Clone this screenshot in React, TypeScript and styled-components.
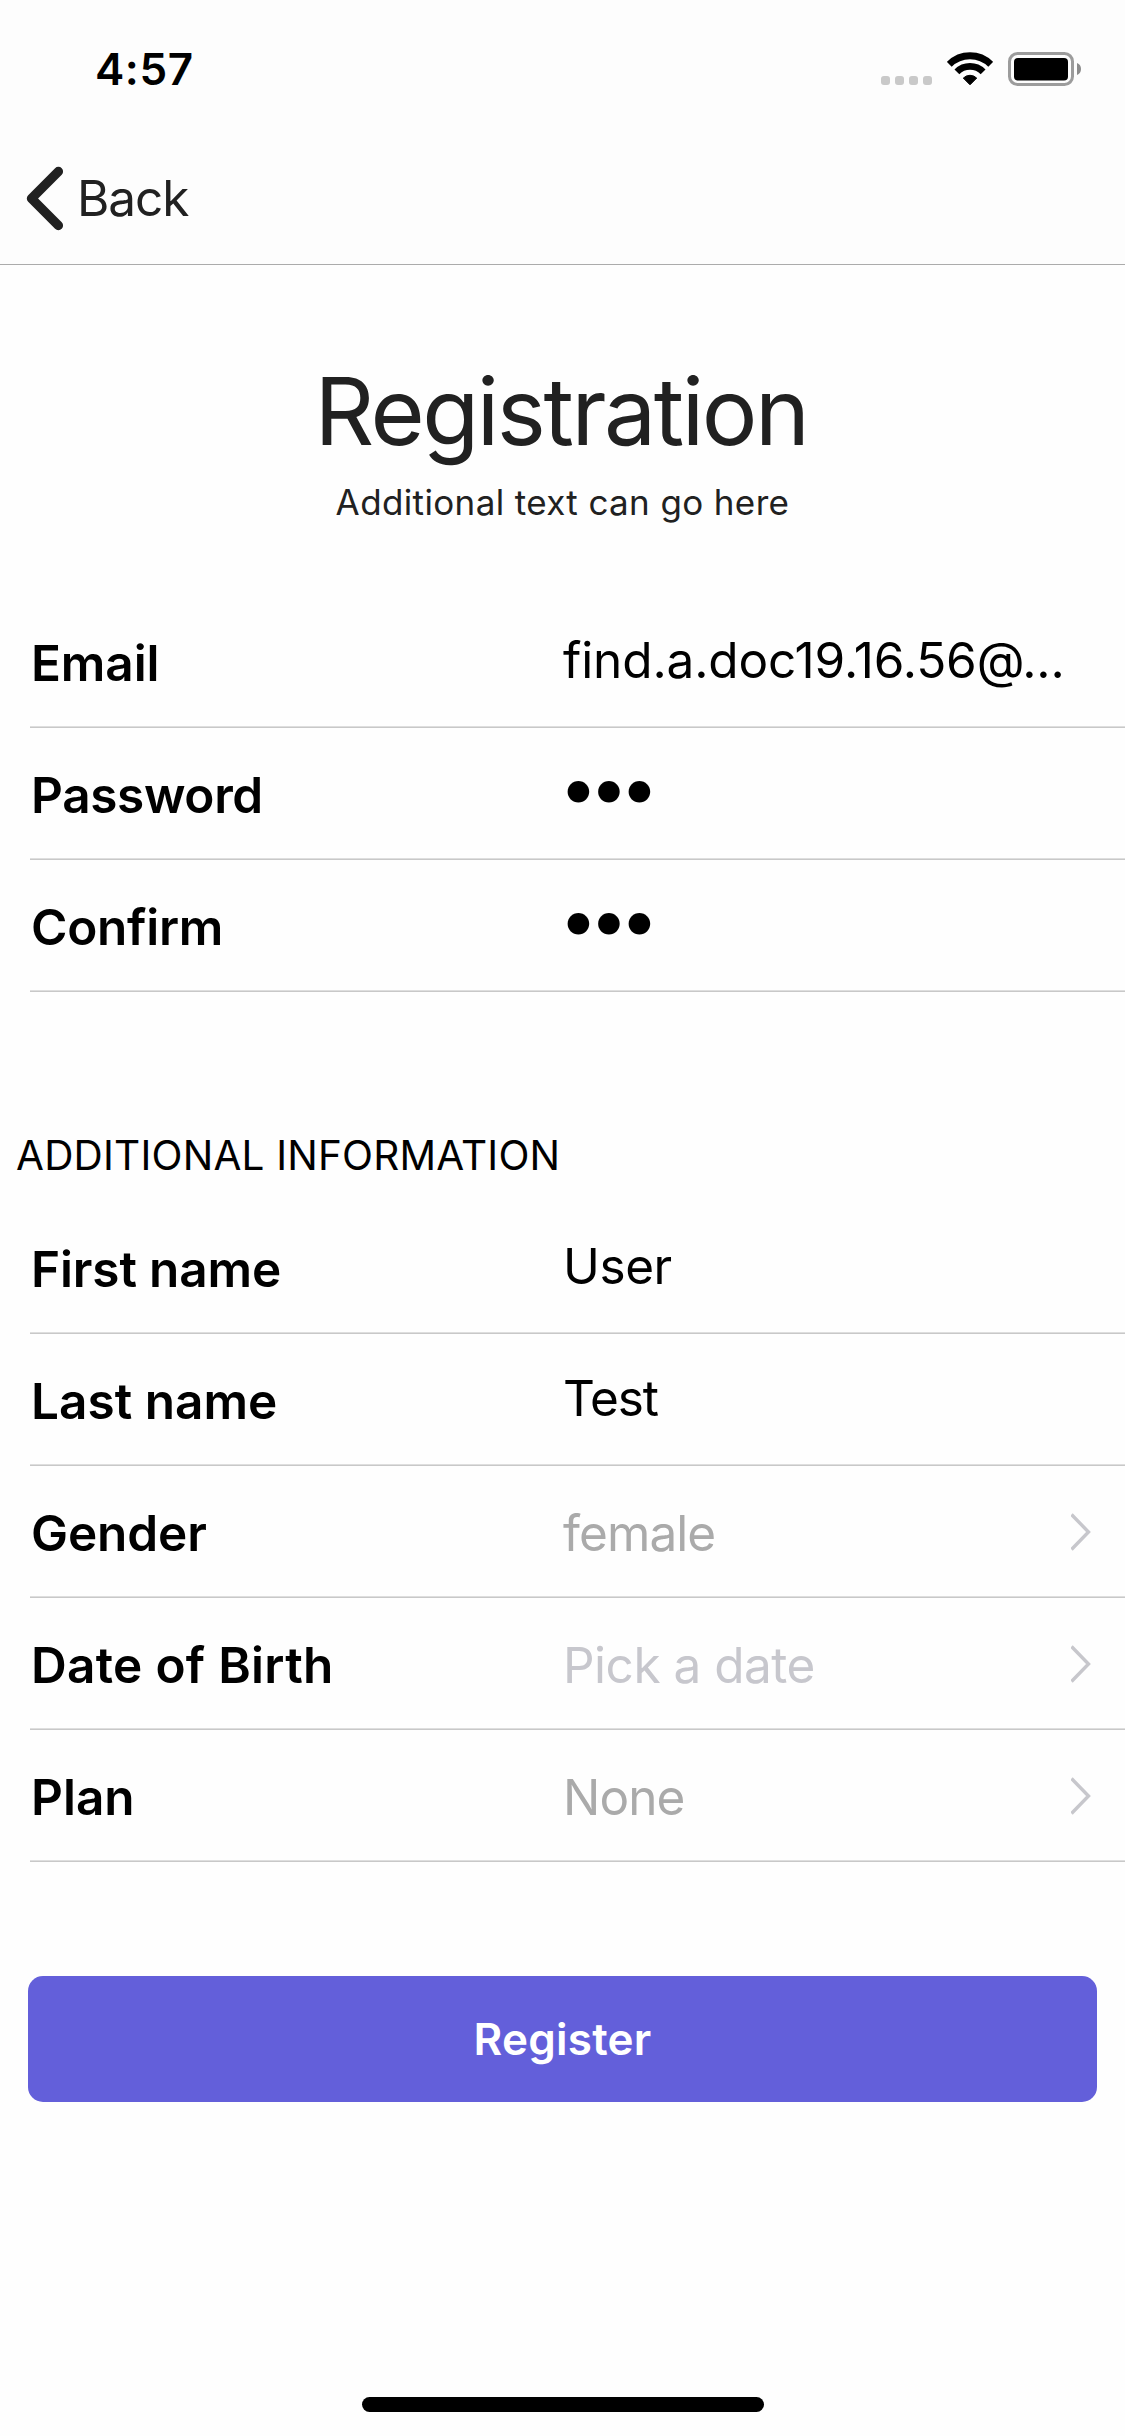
import React from "react";
import styled, { createGlobalStyle } from "styled-components";

const GlobalStyle = createGlobalStyle`
  * { box-sizing: border-box; }
  body {
    margin: 0;
    background: #fefefe;
    font-family: Inter, "Liberation Sans", sans-serif;
    color: #000;
  }
`;

const Screen = styled.div`
  display: flex;
  flex-direction: column;
  width: 1125px;
  height: 2436px;
  overflow: hidden;
`;

const Header = styled.header`
  height: 265px;
  background: #fdfdfd;
  border-bottom: 1px solid #ababab;
`;

const StatusBar = styled.div`
  display: flex;
  justify-content: space-between;
  align-items: flex-start;
  height: 132px;
  padding: 44px 44px 0 95px;
`;

const Time = styled.span`
  font-size: 44px;
  line-height: 50px;
  font-weight: 600;
  letter-spacing: 0.56px;
`;

const Indicators = styled.div`
  display: flex;
  align-items: flex-start;
  gap: 15px;
  padding-top: 8px;
`;

const SignalDots = styled.div`
  display: flex;
  gap: 5px;
  padding-top: 24px;
`;

const SignalDot = styled.span`
  width: 9px;
  height: 9px;
  border-radius: 3px;
  background: #c9c9c9;
`;

const Icon = styled.svg`
  display: block;
  flex: none;
`;

const NavBar = styled.nav`
  display: flex;
  align-items: center;
  height: 132px;
  padding-left: 24px;
`;

const BackButton = styled.button`
  display: flex;
  align-items: center;
  gap: 11px;
  padding: 0;
  border: 0;
  background: none;
  color: #212121;
  font: 400 49.5px/60px Inter, "Liberation Sans", sans-serif;
  letter-spacing: -1.1px;
`;

const Content = styled.main`
  flex: 1;
  display: flex;
  flex-direction: column;
`;

const Heading = styled.div`
  padding-top: 90px;
  text-align: center;
  color: #212121;
`;

const Title = styled.h1`
  margin: 0;
  padding-right: 3px;
  font-size: 93px;
  line-height: 112px;
  font-weight: 400;
  letter-spacing: -2.47px;
`;

const Subtitle = styled.p`
  margin: 13px 0 0;
  font-size: 35px;
  line-height: 44px;
  letter-spacing: 0.37px;
`;

const FieldList = styled.div<{ $top: number }>`
  margin: ${(p) => p.$top}px 0 0 30px;
`;

const SectionTitle = styled.h2`
  margin: 139px 0 0 16px;
  font-size: 40.5px;
  line-height: 50px;
  font-weight: 400;
  letter-spacing: 0.2px;
`;

const Row = styled.div`
  display: grid;
  grid-template-columns: 533px 1fr auto;
  align-items: center;
  height: 132px;
  padding-right: 34px;
  border-bottom: 1px solid #c8c8c8;
  box-shadow: inset 0 -1px 0 #dedede;
`;

const Label = styled.label<{ $spacing: number }>`
  padding: 3px 0 0 1px;
  font-size: 49.5px;
  line-height: 60px;
  font-weight: 600;
  letter-spacing: ${(p) => p.$spacing}px;
`;

type Tone = "entered" | "chosen" | "placeholder";

const toneColor: Record<Tone, string> = {
  entered: "#000",
  chosen: "#aaaaaa",
  placeholder: "#c7c7cd",
};

const Value = styled.span<{ $tone: Tone; $spacing: number }>`
  padding-top: ${(p) => (p.$tone === "entered" ? 0 : 3)}px;
  padding-bottom: ${(p) => (p.$tone === "entered" ? 3 : 0)}px;
  font-size: 49.5px;
  line-height: 60px;
  white-space: nowrap;
  color: ${(p) => toneColor[p.$tone]};
  letter-spacing: ${(p) => p.$spacing}px;
`;

const Secret = styled.span`
  padding-bottom: 13px;
  margin-left: -4px;
  font-size: 69px;
  line-height: 84px;
  letter-spacing: -8.3px;
`;

const ChevronBox = styled.span`
  padding-top: 1px;
`;

const RegisterButton = styled.button`
  display: flex;
  align-items: center;
  justify-content: center;
  flex: none;
  height: 126px;
  margin: 114px 28px 0;
  padding: 0;
  border: 0;
  border-radius: 15px;
  background: #635fda;
  color: #fff;
  font: 600 44px/54px Inter, "Liberation Sans", sans-serif;
  letter-spacing: 0.25px;
`;

const HomeIndicator = styled.div`
  width: 402px;
  height: 15px;
  margin: 0 auto 24px;
  border-radius: 8px;
  background: #000;
`;

function WifiIcon() {
  return (
    <Icon width="46" height="34" viewBox="0 0 46 34" fill="none" stroke="#000" strokeWidth="6.8">
      <path d="M2.3 12.3A29.3 29.3 0 0 1 43.7 12.3" />
      <path d="M9.9 19.9A18.5 18.5 0 0 1 36.1 19.9" />
      <path d="M16.3 26.1A9.4 9.4 0 0 1 29.7 26.1L23 32.8Z" fill="#000" stroke="#000" strokeWidth="1" strokeLinejoin="round" />
    </Icon>
  );
}

function BatteryIcon() {
  return (
    <Icon width="73" height="34" viewBox="0 0 73 34">
      <rect x="1.5" y="1.5" width="63" height="31" rx="8" fill="none" stroke="#9c9c9c" strokeWidth="3" />
      <rect x="6" y="6" width="54" height="22.5" rx="4" fill="#000" />
      <path d="M69 11C71.6 12 73 14.2 73 17C73 19.8 71.6 22 69 23Z" fill="#8c8c8c" />
    </Icon>
  );
}

function BackIcon() {
  return (
    <Icon width="42" height="66" viewBox="0 0 42 66" fill="none">
      <path d="M34.4 6.5L7.5 33.5L34.4 60.5" stroke="#212121" strokeWidth="9.4" strokeLinecap="round" strokeLinejoin="round" />
    </Icon>
  );
}

function DisclosureIcon() {
  return (
    <Icon width="20" height="38" viewBox="0 0 20 38" fill="none">
      <path d="M0.5 1.5L17.5 19L0.5 36.5" stroke="#c7c7cc" strokeWidth="3.4" />
    </Icon>
  );
}

interface Field {
  label: string;
  value: string;
  labelSpacing: number;
  valueSpacing?: number;
  tone?: Tone;
  secret?: boolean;
}

const accountFields: Field[] = [
  { label: "Email", value: "find.a.doc19.16.56@...", labelSpacing: -0.1, valueSpacing: -0.12 },
  { label: "Password", value: "•••", labelSpacing: -0.35, secret: true },
  { label: "Confirm", value: "•••", labelSpacing: -0.3, secret: true },
];

const personalFields: Field[] = [
  { label: "First name", value: "User", labelSpacing: -0.12, valueSpacing: -0.4 },
  { label: "Last name", value: "Test", labelSpacing: 0.02, valueSpacing: -1.1 },
  { label: "Gender", value: "female", labelSpacing: -0.12, valueSpacing: -0.9, tone: "chosen" },
  { label: "Date of Birth", value: "Pick a date", labelSpacing: 0.3, valueSpacing: -0.5, tone: "placeholder" },
  { label: "Plan", value: "None", labelSpacing: 0, valueSpacing: -0.9, tone: "chosen" },
];

function FieldRow({ field }: { field: Field }) {
  const tone = field.tone ?? "entered";
  return (
    <Row>
      <Label $spacing={field.labelSpacing}>{field.label}</Label>
      {field.secret ? (
        <Secret>{field.value}</Secret>
      ) : (
        <Value $tone={tone} $spacing={field.valueSpacing ?? 0}>{field.value}</Value>
      )}
      {tone !== "entered" && (
        <ChevronBox>
          <DisclosureIcon />
        </ChevronBox>
      )}
    </Row>
  );
}

export default function App() {
  return (
    <Screen>
      <GlobalStyle />
      <Header>
        <StatusBar>
          <Time>4:57</Time>
          <Indicators>
            <SignalDots>
              <SignalDot />
              <SignalDot />
              <SignalDot />
              <SignalDot />
            </SignalDots>
            <WifiIcon />
            <BatteryIcon />
          </Indicators>
        </StatusBar>
        <NavBar>
          <BackButton>
            <BackIcon />
            Back
          </BackButton>
        </NavBar>
      </Header>
      <Content>
        <Heading>
          <Title>Registration</Title>
          <Subtitle>Additional text can go here</Subtitle>
        </Heading>
        <FieldList $top={72}>
          {accountFields.map((f) => (
            <FieldRow key={f.label} field={f} />
          ))}
        </FieldList>
        <SectionTitle>ADDITIONAL INFORMATION</SectionTitle>
        <FieldList $top={21}>
          {personalFields.map((f) => (
            <FieldRow key={f.label} field={f} />
          ))}
        </FieldList>
        <RegisterButton>Register</RegisterButton>
      </Content>
      <HomeIndicator />
    </Screen>
  );
}
